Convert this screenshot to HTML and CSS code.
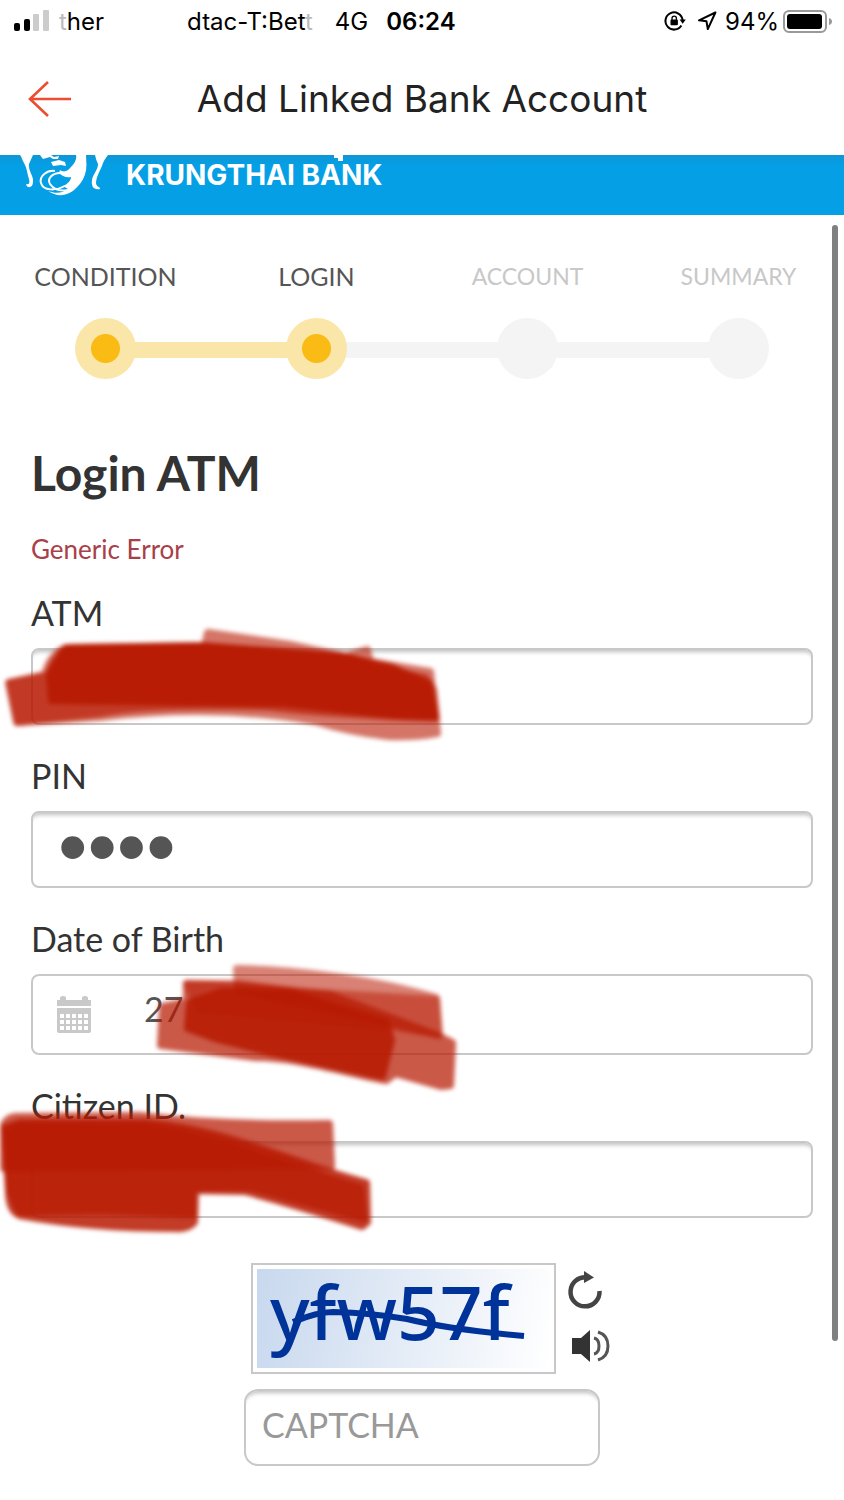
FILE: index.html
```html
<!DOCTYPE html>
<html lang="en">
<head>
    <meta charset="UTF-8">
    <meta name="viewport" content="width=device-width, initial-scale=1.0">
    <title>Add Linked Bank Account</title>
    <link rel="stylesheet" href="styles.css">
</head>
<body>
    <div class="status-bar">
        <svg class="signal" width="35" height="22" viewBox="0 0 35 22">
            <rect x="0" y="13" width="6" height="8" rx="2" fill="#000"/>
            <rect x="10" y="9" width="6" height="12" rx="2" fill="#000"/>
            <rect x="19" y="4" width="6" height="17" rx="1" fill="#ccc"/>
            <rect x="29" y="0" width="6" height="21" rx="1" fill="#ccc"/>
        </svg>
        <span class="carrier-end"><span class="faded">t</span>her</span>
        <span class="carrier">dtac-T:Bet<span class="faded">t</span></span>
        <span class="network">4G</span>
        <span class="clock">06:24</span>
        <div class="status-right">
            <svg width="22" height="20" viewBox="0 0 22 20">
                <path d="M17.4 14.5A8.6 8.6 0 1 1 18.6 9" fill="none" stroke="#000" stroke-width="2"/>
                <path d="M15.6 8.4h6.2l-3.1 4.4z"/>
                <rect x="6.5" y="8.5" width="7.4" height="5.8" rx="1"/>
                <path d="M8 9V7.4a2.2 2.2 0 0 1 4.4 0V9" fill="none" stroke="#000" stroke-width="1.3"/>
            </svg>
            <svg class="location" width="20" height="20" viewBox="0 0 20 20">
                <path d="M18.4 1.5L2 9.3l7.5 1 1.3 7.8z" fill="none" stroke="#000" stroke-width="2" stroke-linejoin="round"/>
            </svg>
            <span>94%</span>
            <svg class="battery" width="49" height="23" viewBox="0 0 49 23">
                <rect x="1" y="1" width="42" height="21" rx="5" fill="none" stroke="#999" stroke-width="2"/>
                <rect x="4" y="4" width="35" height="15" rx="3"/>
                <path d="M46 8q3 1 3 3.500t-3 3.500z" fill="#999"/>
            </svg>
        </div>
    </div>

    <header class="nav">
        <a class="back" href="#" aria-label="Back">
            <svg width="44" height="38" viewBox="0 0 44 38">
                <path d="M20 2L2 19l18 17M2 19h41" fill="none" stroke="#ec4d31" stroke-width="2.600"/>
            </svg>
        </a>
        <h1>Add Linked Bank Account</h1>
    </header>

    <main class="content">
        <div class="banner">
            <svg class="logo" width="90" height="42" viewBox="0 0 90 42">
                <g fill="#fff">
                    <path d="M0 0h13l-4 9c-1 7 5 12 4 18 0 6-6 7-7 2 3 1 4-1 3-5C7 18 7 13 4 8 2 5 2 2 0 0z"/>
                    <path d="M88 0H75q1 5 3 9c0 6-5 10-6 16-1 7 2 10 8 9 1-2-4-2-4-6 0-7 5-13 7-20 1-3 3-5 5-8z"/>
                    <path d="M56 0h10c1 13-1 23-8 31-8 10-20 12-30 5 8 3 15 2 20-2l-5-3c5-2 8-6 8-9-5 1-9-1-12-4l1-3c4 3 8 1 11-3 4-4 6-8 5-12z"/>
                    <path d="M20 0h11l3 2 5-1-1 3h-5l-3-2-7 2zM31 7l8-2 6 2 1 4-5-1-8 1z"/>
                </g>
                <g fill="none" stroke="#fff" stroke-width="2">
                    <path d="M35 16c-8-1-16 5-14 12 2 8 15 8 24 3"/>
                    <path d="M42 18c-10-1-15 6-12 11 6 9 24 10 32-5 3-6 4-13 3-18"/>
                </g>
            </svg>
            <span class="bank-name">KRUNGTHAI BANK</span>
            <svg class="tone" width="12" height="8" viewBox="0 0 12 8"><path d="M0 0h9v6H4V3H0z" fill="#fff"/></svg>
        </div>

        <ol class="steps">
            <li class="step active linked">CONDITION</li>
            <li class="step active">LOGIN</li>
            <li class="step">ACCOUNT</li>
            <li class="step">SUMMARY</li>
        </ol>

        <form class="login-form">
            <h2>Login ATM</h2>
            <p class="error">Generic Error</p>

            <div class="field">
                <label for="atm">ATM</label>
                <input type="text" id="atm" autocomplete="off">
                <svg class="marker" width="460" height="160" viewBox="0 588 460 160">
                    <g fill="#b81a02" stroke="#b81a02" stroke-width="8" stroke-linejoin="round">
                        <path opacity=".6" d="M208 633L290 645 345 657 367 650 370 662 430 672 437 733Q415 737 388 736 350 732 315 721C230 706 150 711 100 717L17 722 9 683 45 675Q50 655 66 648L205 646z"/>
                        <path opacity=".65" d="M10 683L48 676Q57 651 70 648L205 646 350 658 375 668 425 678 433 690 436 718Q340 715 270 707 150 703 100 713L18 722z"/>
                        <path opacity=".92" d="M66 649L205 647 340 656 392 668 428 684 434 716 395 715 285 703 52 700 50 674z"/>
                    </g>
                </svg>
            </div>

            <div class="field">
                <label for="pin">PIN</label>
                <input type="password" id="pin" value="0000" autocomplete="off">
            </div>

            <div class="field">
                <label for="birth">Date of Birth</label>
                <div class="date-box">
                    <svg width="34" height="38" viewBox="0 0 34 38">
                        <path fill="#c9c9c9" d="M0 4h3V2q0-2 3-2t3 2v2h16V2q0-2 3-2t3 2v2h3v6H0zM0 12h34v23q0 2-2 2H2q-2 0-2-2z"/>
                        <g stroke="#fff" stroke-width="4" stroke-dasharray="4 2">
                            <path d="M3 20h28M3 26h28M3 32h28"/>
                        </g>
                    </svg>
                    <input type="text" id="birth" value="27" autocomplete="off">
                </div>
                <svg class="marker" width="480" height="190" viewBox="0 914 480 190">
                    <g fill="#b81a02" stroke="#b81a02" stroke-width="8" stroke-linejoin="round">
                        <path opacity=".55" d="M237 969C300 970 380 981 436 998L439 1035 380 1020 238 990z"/>
                        <path opacity=".72" d="M187 984L238 986 330 995 438 1036 452 1043 450 1085 441 1086 395 1073 386 1080C350 1074 300 1057 255 1057L161 1045 163 1007 187 1002z"/>
                        <path opacity=".5" d="M187 984L238 984 300 992 436 1000 438 1034 390 1026 200 1008z"/>
                        <path opacity=".88" d="M190 1003L222 992 290 993 385 1022 391 1040 382 1076 270 1052 215 1038 188 1028z"/>
                    </g>
                </svg>
            </div>

            <div class="field">
                <label for="citizen">Citizen ID.</label>
                <input type="text" id="citizen" autocomplete="off">
                <svg class="marker" width="400" height="170" viewBox="0 1081 400 170">
                    <g fill="#b81a02" stroke="#b81a02" stroke-width="8" stroke-linejoin="round">
                        <path opacity=".72" d="M4 1125Q7 1118 16 1117L140 1116Q220 1126 329 1124L331 1166 300 1165 4 1168z"/>
                        <path opacity=".85" d="M5 1128L20 1123 145 1123C230 1130 290 1163 366 1183L367 1222 362 1226Q300 1206 245 1191L195 1190 194 1222Q188 1229 176 1228 90 1228 20 1215 9 1211 9 1190z"/>
                        <path opacity=".75" d="M8 1132L20 1126 145 1127C210 1134 280 1165 360 1188L363 1218 250 1187 192 1188 192 1214 100 1210 20 1212 10 1190z"/>
                    </g>
                </svg>
            </div>

            <div class="captcha">
                <div class="captcha-row">
                    <div class="captcha-image">
                        <span class="captcha-text">yfw57f</span>
                        <svg class="strike" viewBox="0 0 293 99" preserveAspectRatio="none">
                            <path d="M36 53Q60 43 76 43 115 44 150 50 190 60 267 67" fill="none" stroke="#003399" stroke-width="6"/>
                        </svg>
                    </div>
                    <div class="captcha-tools">
                        <button type="button" aria-label="Refresh">
                            <svg width="36" height="38" viewBox="0 0 36 38">
                                <path d="M20 6.500A14.500 14.500 0 1 0 32.500 20" fill="none" stroke="#444" stroke-width="4.500"/>
                                <path d="M17 0l10 6.500L17 12z" fill="#444"/>
                            </svg>
                        </button>
                        <button type="button" aria-label="Listen">
                            <svg width="40" height="34" viewBox="0 0 40 34">
                                <path d="M1 9h9l9-8v32l-9-8H1z" fill="#333"/>
                                <path d="M23 9q5 1 5 8t-5 8M27 3q10 3 10 14T27 31" fill="none" stroke="#555" stroke-width="3"/>
                            </svg>
                        </button>
                    </div>
                </div>
                <input type="text" class="captcha-input" placeholder="CAPTCHA" aria-label="CAPTCHA">
            </div>
        </form>
        <div class="scroll-thumb"></div>
    </main>
</body>
</html>
```

FILE: styles.css
```css
* {
    box-sizing: border-box;
}
body {
    margin: 0;
    background: #fff;
    color: #333;
    font-family: Lato, sans-serif;
}
button {
    border: 0;
    padding: 0;
    background: none;
}
svg {
    display: block;
}

/* status bar */
.status-bar {
    display: flex;
    align-items: center;
    height: 42px;
    padding: 0 12px 0 14px;
    font-family: Inter, sans-serif;
    font-size: 24px;
    color: #000;
}
.carrier-end {
    margin-left: 10px;
}
.faded {
    color: #bbb;
}
.carrier {
    margin-left: 83px;
}
.network {
    margin-left: 22px;
}
.clock {
    margin-left: 18px;
    font-weight: 600;
}
.status-right {
    display: flex;
    align-items: center;
    margin-left: auto;
}
.location {
    margin: 0 8px 0 11px;
}
.battery {
    margin-left: 4px;
}

/* title */
.nav {
    position: relative;
    display: flex;
    align-items: center;
    justify-content: center;
    height: 113px;
}
.nav h1 {
    margin: 0;
    font-family: Inter, sans-serif;
    font-size: 37px;
    font-weight: 400;
    color: #222;
}
.back {
    position: absolute;
    left: 28px;
}

.content {
    position: relative;
    padding-bottom: 34px;
}
.banner {
    position: relative;
    display: flex;
    height: 60px;
    padding-left: 20px;
    background: linear-gradient(#1096d5, #049fe5 10px);
}
.bank-name {
    margin-left: 16px;
    font-family: Inter, sans-serif;
    font-size: 28px;
    font-weight: 700;
    line-height: 41px;
    color: #fff;
}
.tone {
    position: absolute;
    left: 334px;
    top: 0;
}

/* steps */
.steps {
    display: grid;
    grid-template-columns: repeat(4, 1fr);
    margin: 0;
    padding: 46px 0 0;
    list-style: none;
}
.step {
    position: relative;
    display: flex;
    flex-direction: column;
    align-items: center;
    gap: 27px;
    font-size: 23px;
    line-height: 30px;
    color: #c8c8c8;
}
.step::after {
    content: "";
    width: 61px;
    height: 61px;
    border-radius: 50%;
    background: #f4f4f4;
}
.step:not(:last-child)::before {
    content: "";
    position: absolute;
    left: 50%;
    bottom: 21px;
    width: 100%;
    height: 16px;
    background: #f4f4f4;
}
.step.linked::before {
    background: #fae6a8;
}
.step.active {
    font-size: 25px;
    color: #555;
}
.step.active::after {
    z-index: 1;
    background: radial-gradient(circle, #fabc14 14px, #fae6a8 15px);
}

/* form */
.login-form h2 {
    margin: 64px 31px 0;
    font-size: 48px;
    font-weight: 700;
    line-height: 60px;
}
.error {
    margin: 30px 31px 0;
    font-size: 26px;
    line-height: 32px;
    color: #a94048;
}
.field {
    position: relative;
    padding: 0 31px;
    margin-top: 26px;
}
.error + .field {
    margin-top: 23px;
}
.field label {
    display: block;
    margin-bottom: 10px;
    font-size: 34px;
    line-height: 50px;
}
.field > input,
.date-box,
.captcha-input {
    display: block;
    width: 100%;
    height: 77px;
    padding: 0 28px 6px;
    border: 2px solid #c8c8c8;
    border-radius: 8px;
    background: #fff;
    box-shadow: inset 0 6px 4px -4px #c0c0c0;
    font-family: Lato, sans-serif;
    font-size: 34px;
    color: #555;
}
.field > input[type="password"] {
    padding-left: 25px;
    font-family: "Liberation Sans", sans-serif;
    font-size: 84px;
}
.date-box {
    display: flex;
    align-items: center;
    gap: 53px;
    height: 81px;
    padding: 0 24px;
    box-shadow: none;
}
.date-box input {
    flex: 1;
    min-width: 0;
    padding: 0 0 12px;
    border: 0;
    background: none;
    font: inherit;
    color: inherit;
}
.marker {
    position: absolute;
    left: 0;
    top: 0;
    overflow: visible;
    filter: blur(2px);
    pointer-events: none;
}

/* captcha */
.captcha {
    max-width: 356px;
    margin: 45px auto 0;
}
.captcha-row {
    display: flex;
    gap: 11px;
    padding-left: 7px;
    margin-bottom: 15px;
}
.captcha-image {
    position: relative;
    flex: none;
    width: 305px;
    height: 111px;
    padding: 4px;
    border: 2px solid #c8c8c8;
    background: linear-gradient(100deg, #c8d8ee, #fff) content-box;
}
.captcha-text {
    display: block;
    padding-left: 13px;
    font-family: "Noto Sans", sans-serif;
    font-size: 75px;
    font-weight: 500;
    line-height: 84px;
    color: #039;
}
.strike {
    position: absolute;
    inset: 4px;
    width: 293px;
    height: 99px;
}
.captcha-tools {
    display: flex;
    flex-direction: column;
    gap: 20px;
    padding-top: 8px;
}
.captcha-tools button:last-child {
    padding-left: 4px;
}
.captcha-input {
    padding-left: 16px;
    border-radius: 14px;
}
.captcha-input::placeholder {
    color: #999;
}
.scroll-thumb {
    position: absolute;
    top: 70px;
    right: 6px;
    width: 6px;
    height: 83%;
    border-radius: 3px;
    background: #808080;
}
```
